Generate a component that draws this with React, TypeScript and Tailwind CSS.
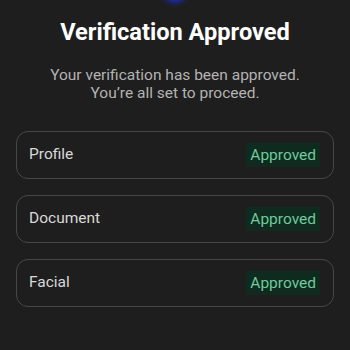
import React from "react";

const rows = ["Profile", "Document", "Facial"];

export default function App() {
  return (
    <div
      className="w-[350px] h-[350px] bg-[#1e1e1e] overflow-hidden relative flex flex-col items-center"
      style={{ fontFamily: "Roboto, 'Noto Sans', sans-serif" }}
    >
      <div className="absolute left-[163px] top-[-22px] w-[24px] h-[24px] rounded-full bg-[#1a2fe0] blur-[3px]" />
      <h1 className="mt-[15px] text-[23.6px] leading-[34px] font-bold text-white">
        Verification Approved
      </h1>
      <p className="mt-[17px] text-center text-[15.5px] leading-[18px] text-[#b3b3b3]">
        Your verification has been approved.
        <br />
        You’re all set to proceed.
      </p>
      <div className="mt-[29px] w-full px-[16px] flex flex-col gap-[16px]">
        {rows.map((r) => (
          <div
            key={r}
            className="h-[48px] rounded-[12px] border border-[#474747] flex items-center justify-between pl-[12px] pr-[13px]"
          >
            <span className="text-[15.5px] text-[#d9d9d9]">{r}</span>
            <span className="text-[15.5px] text-[#6ccb9c] bg-[#0f2a1f] px-[4px] py-[2px] leading-[20px]">
              Approved
            </span>
          </div>
        ))}
      </div>
    </div>
  );
}
